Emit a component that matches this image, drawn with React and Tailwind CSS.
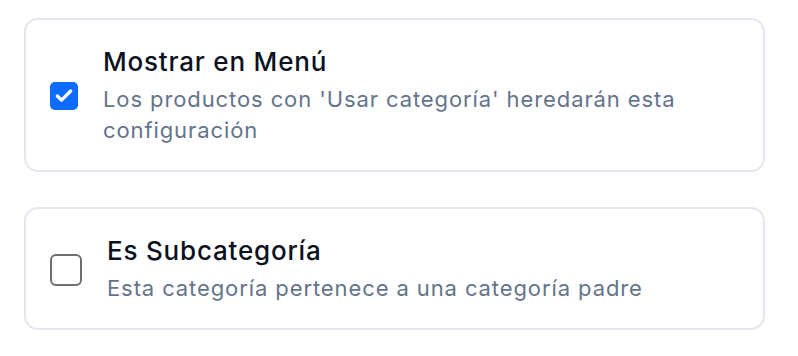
import { Check } from "lucide-react";

const font = { fontFamily: "Inter, 'Noto Sans', sans-serif" };

function Toggle({ checked }) {
  if (checked) {
    return (
      <div className="w-[28px] h-[28px] shrink-0 rounded-[5px] bg-[#0b6cff] flex items-center justify-center">
        <Check size={20} strokeWidth={4} className="text-white" />
      </div>
    );
  }
  return (
    <div className="w-[32px] h-[32px] shrink-0 rounded-[6px] border-2 border-[#6f6f73] bg-white" />
  );
}

function OptionCard({ checked, title, description }) {
  return (
    <div className="w-[741px] rounded-[14px] border-2 border-[#e4e7f0] bg-white flex items-center gap-[25px] pl-[24px] pr-6 pt-[26px] pb-[24px]">
      <Toggle checked={checked} />
      <div className="flex flex-col">
        <div className="text-[26px] leading-[32px] mb-[6px] font-medium tracking-[0.8px] text-[#0b1120]">
          {title}
        </div>
        <div className="text-[22px] leading-[31px] tracking-[0.9px] text-[#64748b] max-w-[610px]">
          {description}
        </div>
      </div>
    </div>
  );
}

export default function App() {
  return (
    <div className="w-[798px] h-[356px] bg-white pl-[24px] pt-[18px] flex flex-col gap-[35px]" style={font}>
      <OptionCard
        checked
        title="Mostrar en Menú"
        description="Los productos con 'Usar categoría' heredarán esta configuración"
      />
      <OptionCard
        title="Es Subcategoría"
        description="Esta categoría pertenece a una categoría padre"
      />
    </div>
  );
}
